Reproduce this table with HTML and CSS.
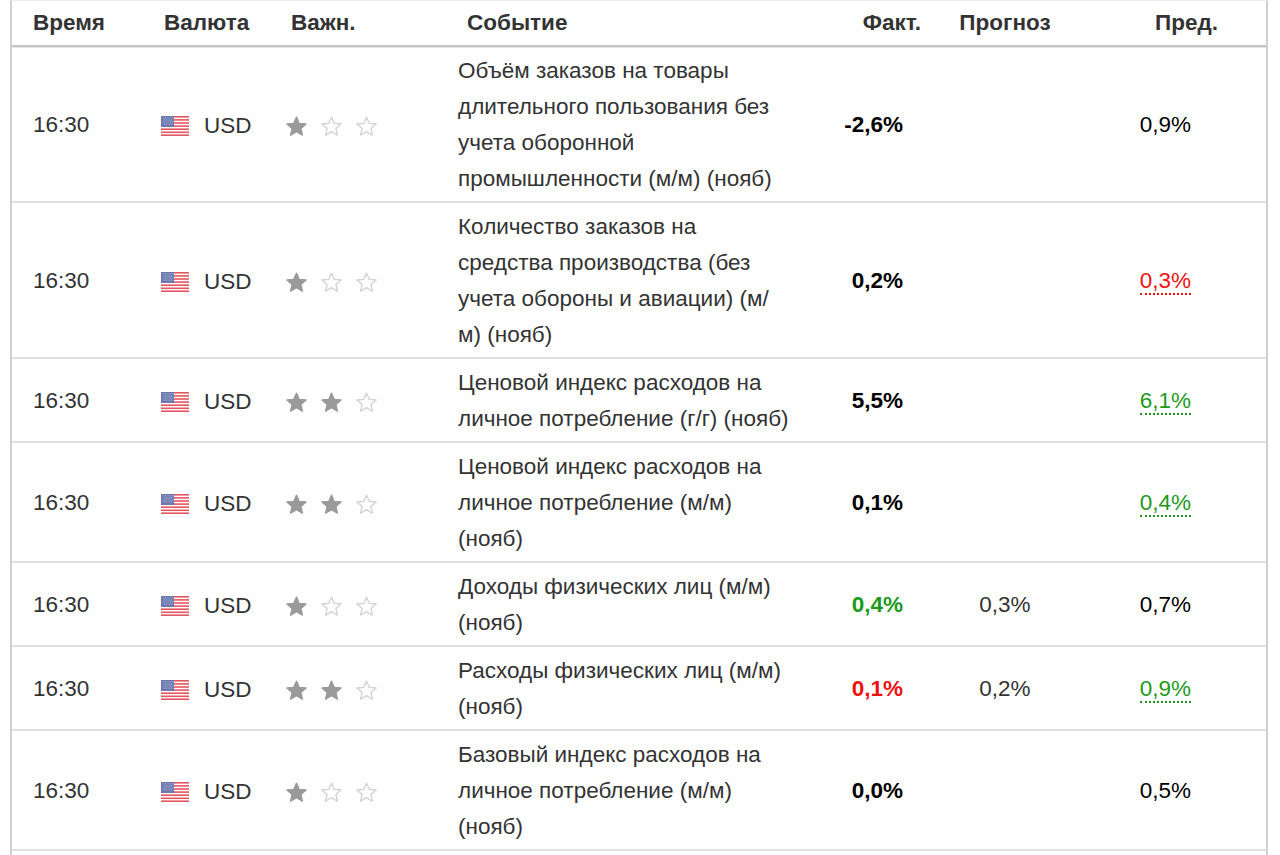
FILE: index.html
```html
<!DOCTYPE html>
<html lang="ru">
<head>
<meta charset="utf-8">
<title>Календарь</title>
<link rel="stylesheet" href="styles.css">
</head>
<body>
<svg width="0" height="0" class="defs" aria-hidden="true">
  <defs>
    <symbol id="flag-us" viewBox="0 0 28 20">
      <rect width="28" height="20" fill="#fff"/>
      <g fill="#e0454f">
        <rect y="0" width="28" height="1.6"/>
        <rect y="3.1" width="28" height="1.6"/>
        <rect y="6.2" width="28" height="1.6"/>
        <rect y="9.3" width="28" height="1.6"/>
        <rect y="12.4" width="28" height="1.6"/>
        <rect y="15.5" width="28" height="1.6"/>
        <rect y="18.4" width="28" height="1.6"/>
      </g>
      <rect width="13" height="10.9" fill="#5b6aa8"/>
      <g fill="#c9cfe6">
        <circle cx="2" cy="1.8" r=".55"/><circle cx="4.5" cy="1.8" r=".55"/><circle cx="7" cy="1.8" r=".55"/><circle cx="9.5" cy="1.8" r=".55"/><circle cx="12" cy="1.8" r=".55"/>
        <circle cx="3.2" cy="3.9" r=".55"/><circle cx="5.7" cy="3.9" r=".55"/><circle cx="8.2" cy="3.9" r=".55"/><circle cx="10.7" cy="3.9" r=".55"/>
        <circle cx="2" cy="6" r=".55"/><circle cx="4.5" cy="6" r=".55"/><circle cx="7" cy="6" r=".55"/><circle cx="9.5" cy="6" r=".55"/><circle cx="12" cy="6" r=".55"/>
        <circle cx="3.2" cy="8.1" r=".55"/><circle cx="5.7" cy="8.1" r=".55"/><circle cx="8.2" cy="8.1" r=".55"/><circle cx="10.7" cy="8.1" r=".55"/>
      </g>
    </symbol>
    <symbol id="star" viewBox="0 0 24 24">
      <path d="M12 2.2l2.9 6.6 7.1.6-5.4 4.7 1.6 7-6.2-3.7-6.2 3.7 1.6-7L2 9.4l7.1-.6z"/>
    </symbol>
  </defs>
</svg>

<table class="cal">
  <thead>
    <tr>
      <th class="c-time">Время</th>
      <th class="c-cur h-cur">Валюта</th>
      <th class="c-imp h-imp">Важн.</th>
      <th class="c-ev h-ev">Событие</th>
      <th class="c-act h-act">Факт.</th>
      <th class="c-fc">Прогноз</th>
      <th class="c-prev h-prev">Пред.</th>
    </tr>
  </thead>
  <tbody>
    <tr>
      <td class="c-time">16:30</td>
      <td class="c-cur"><span class="cur"><svg class="flag"><use href="#flag-us"/></svg>USD</span></td>
      <td class="c-imp"><span class="stars"><svg class="star on"><use href="#star"/></svg><svg class="star"><use href="#star"/></svg><svg class="star"><use href="#star"/></svg></span></td>
      <td class="c-ev">Объём заказов на товары длительного пользования без учета оборонной промышленности (м/<wbr>м) (нояб)</td>
      <td class="c-act">-2,6%</td>
      <td class="c-fc"></td>
      <td class="c-prev">0,9%</td>
    </tr>
    <tr>
      <td class="c-time">16:30</td>
      <td class="c-cur"><span class="cur"><svg class="flag"><use href="#flag-us"/></svg>USD</span></td>
      <td class="c-imp"><span class="stars"><svg class="star on"><use href="#star"/></svg><svg class="star"><use href="#star"/></svg><svg class="star"><use href="#star"/></svg></span></td>
      <td class="c-ev">Количество заказов на средства производства (без учета обороны и авиации) (м/<wbr>м) (нояб)</td>
      <td class="c-act">0,2%</td>
      <td class="c-fc"></td>
      <td class="c-prev"><span class="rev neg">0,3%</span></td>
    </tr>
    <tr>
      <td class="c-time">16:30</td>
      <td class="c-cur"><span class="cur"><svg class="flag"><use href="#flag-us"/></svg>USD</span></td>
      <td class="c-imp"><span class="stars"><svg class="star on"><use href="#star"/></svg><svg class="star on"><use href="#star"/></svg><svg class="star"><use href="#star"/></svg></span></td>
      <td class="c-ev">Ценовой индекс расходов на личное потребление (г/г) (нояб)</td>
      <td class="c-act">5,5%</td>
      <td class="c-fc"></td>
      <td class="c-prev"><span class="rev pos">6,1%</span></td>
    </tr>
    <tr>
      <td class="c-time">16:30</td>
      <td class="c-cur"><span class="cur"><svg class="flag"><use href="#flag-us"/></svg>USD</span></td>
      <td class="c-imp"><span class="stars"><svg class="star on"><use href="#star"/></svg><svg class="star on"><use href="#star"/></svg><svg class="star"><use href="#star"/></svg></span></td>
      <td class="c-ev">Ценовой индекс расходов на личное потребление (м/<wbr>м) (нояб)</td>
      <td class="c-act">0,1%</td>
      <td class="c-fc"></td>
      <td class="c-prev"><span class="rev pos">0,4%</span></td>
    </tr>
    <tr>
      <td class="c-time">16:30</td>
      <td class="c-cur"><span class="cur"><svg class="flag"><use href="#flag-us"/></svg>USD</span></td>
      <td class="c-imp"><span class="stars"><svg class="star on"><use href="#star"/></svg><svg class="star"><use href="#star"/></svg><svg class="star"><use href="#star"/></svg></span></td>
      <td class="c-ev">Доходы физических лиц (м/<wbr>м) (нояб)</td>
      <td class="c-act pos">0,4%</td>
      <td class="c-fc">0,3%</td>
      <td class="c-prev">0,7%</td>
    </tr>
    <tr>
      <td class="c-time">16:30</td>
      <td class="c-cur"><span class="cur"><svg class="flag"><use href="#flag-us"/></svg>USD</span></td>
      <td class="c-imp"><span class="stars"><svg class="star on"><use href="#star"/></svg><svg class="star on"><use href="#star"/></svg><svg class="star"><use href="#star"/></svg></span></td>
      <td class="c-ev">Расходы физических лиц (м/<wbr>м) (нояб)</td>
      <td class="c-act neg">0,1%</td>
      <td class="c-fc">0,2%</td>
      <td class="c-prev"><span class="rev pos">0,9%</span></td>
    </tr>
    <tr>
      <td class="c-time">16:30</td>
      <td class="c-cur"><span class="cur"><svg class="flag"><use href="#flag-us"/></svg>USD</span></td>
      <td class="c-imp"><span class="stars"><svg class="star on"><use href="#star"/></svg><svg class="star"><use href="#star"/></svg><svg class="star"><use href="#star"/></svg></span></td>
      <td class="c-ev">Базовый индекс расходов на личное потребление (м/<wbr>м) (нояб)</td>
      <td class="c-act">0,0%</td>
      <td class="c-fc"></td>
      <td class="c-prev">0,5%</td>
    </tr>
    <tr class="stub">
      <td class="c-time"></td><td class="c-cur"></td><td class="c-imp"></td><td class="c-ev"></td><td class="c-act"></td><td class="c-fc"></td><td class="c-prev"></td>
    </tr>
  </tbody>
</table>
</body>
</html>
```

FILE: styles.css
```css
html, body {
  margin: 0;
  padding: 0;
  background: #fff;
}

body {
  font-family: "Liberation Sans", Arial, sans-serif;
  font-size: 22.5px;
  color: #333;
  overflow: hidden;
}

.defs {
  position: absolute;
  width: 0;
  height: 0;
}

.cal {
  margin-left: 10px;
  width: 1258px;
  table-layout: fixed;
  border-collapse: separate;
  border-spacing: 0;
  border-left: 2px solid #d0d0d0;
  border-right: 2px solid #d0d0d0;
  border-top: 1px solid #ececec;
}

.cal th,
.cal td {
  box-sizing: border-box;
  line-height: 36px;
  vertical-align: middle;
  text-align: left;
  white-space: normal;
}

.cal th {
  font-weight: bold;
  color: #333;
  padding: 4px 0 4px;
  border-bottom: 2px solid #c4c4c4;
  box-shadow: 0 1px 0 #e6e6e6;
}

.cal td {
  padding: 6px 0 4px;
  border-bottom: 2px solid #e0e0e0;
}

.c-time { width: 128px; padding-left: 21px !important; }
.c-cur  { width: 135px; padding-left: 21px !important; }
.c-imp  { width: 165px; padding-left: 10px !important; }
.c-ev   { width: 380px; padding-left: 18px !important; padding-right: 29px !important; }
.c-act  { width: 105px; text-align: right !important; padding-right: 22px !important; font-weight: bold; color: #000; }
.c-fc   { width: 160px; text-align: center !important; }
.c-prev { width: 181px; text-align: right !important; padding-right: 75px !important; color: #000; }

.h-cur  { padding-left: 24px !important; }
.h-imp  { padding-left: 16px !important; }
.h-ev   { padding-left: 27px !important; }
.h-act  { padding-right: 4px !important; color: #333 !important; }
.h-prev { padding-right: 48px !important; color: #333 !important; }

.cur {
  display: inline-flex;
  align-items: center;
  gap: 15px;
  vertical-align: middle;
}

.flag {
  width: 28px;
  height: 20px;
  opacity: 0.9;
}

.stars {
  display: inline-flex;
  align-items: center;
  gap: 12px;
  vertical-align: middle;
}

.star {
  width: 23px;
  height: 23px;
  fill: #fff;
  stroke: #d2d2d2;
  stroke-width: 1.4;
  stroke-linejoin: round;
}

.star.on {
  fill: #9a9a9a;
  stroke: #9a9a9a;
}

.pos { color: #1c9a1c !important; }
.neg { color: #ee1111 !important; }

.rev {
  border-bottom: 2px dotted currentColor;
  line-height: 24px;
  display: inline-block;
}

.stub td {
  height: 40px;
  padding: 0;
}
```
